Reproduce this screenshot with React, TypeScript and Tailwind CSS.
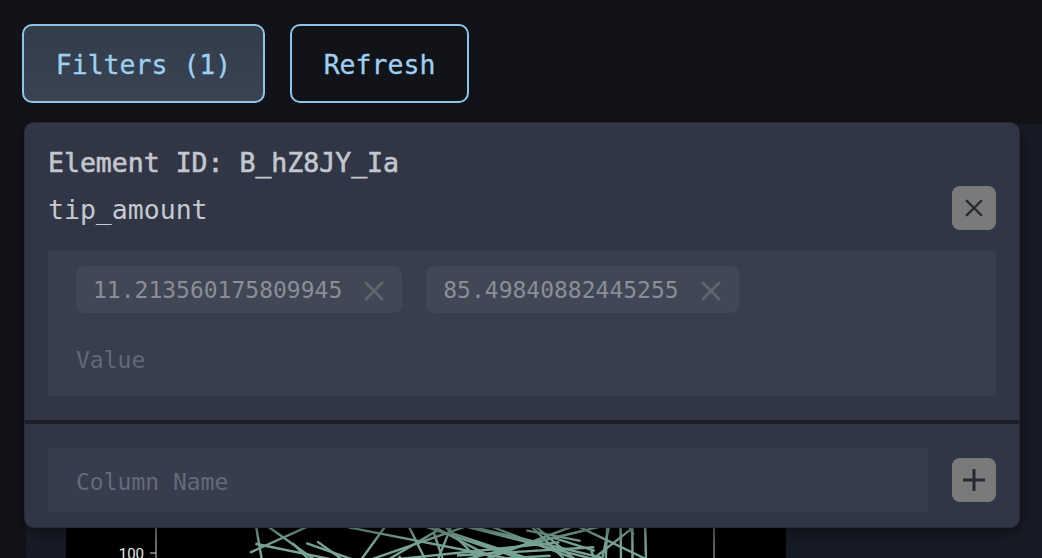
import React from "react";

// deterministic tangle of segments for the chart peeking out under the popover
function makeLines() {
  let seed = 11;
  const rnd = () => {
    seed = (seed * 16807) % 2147483647;
    return seed / 2147483647;
  };
  const out: { x1: number; y1: number; x2: number; y2: number }[] = [];
  for (let i = 0; i < 48; i++) {
    out.push({
      x1: 184 + rnd() * 400,
      y1: 10 + rnd() * 140,
      x2: 184 + rnd() * 400,
      y2: 10 + rnd() * 140,
    });
  }
  // the near-vertical strands on the right side
  out.push({ x1: 554, y1: 0, x2: 556, y2: 160 });
  out.push({ x1: 566, y1: 0, x2: 567, y2: 160 });
  out.push({ x1: 578, y1: 0, x2: 582, y2: 160 });
  out.push({ x1: 542, y1: 30, x2: 536, y2: 160 });
  return out;
}

const lines = makeLines();

function XIcon({ size, stroke, width }: { size: number; stroke: string; width: number }) {
  return (
    <svg width={size} height={size} viewBox="0 0 20 20" fill="none">
      <path d="M2 2L18 18M18 2L2 18" stroke={stroke} strokeWidth={width} strokeLinecap="round" />
    </svg>
  );
}

function PlusIcon() {
  return (
    <svg width="22" height="22" viewBox="0 0 22 22" fill="none">
      <path d="M11 1V21M1 11H21" stroke="#262a35" strokeWidth="3" strokeLinecap="round" />
    </svg>
  );
}

function Chip({ value }: { value: string }) {
  return (
    <div className="flex h-[47px] items-center gap-[22px] rounded-[8px] bg-[#414755] pl-[17px] pr-[18px] pt-[2px] text-[23px] text-[#8a8e98]">
      <span>{value}</span>
      <XIcon size={20} stroke="#60656f" width={2.8} />
    </div>
  );
}

export default function App() {
  return (
    <div
      className="relative h-[558px] w-full overflow-hidden bg-[#121219]"
      style={{ fontFamily: '"DejaVu Sans Mono", "Liberation Mono", monospace' }}
    >
      {/* Toolbar */}
      <div className="flex gap-[25px] pl-[22px] pt-[24px]">
        <button className="flex h-[79px] w-[243px] items-center justify-center rounded-[10px] border-2 border-[#8ec4ea] bg-gradient-to-b from-[#323c4b] to-[#3a4352] pt-[2px] text-[26.5px] text-[#9ed0f2] [-webkit-text-stroke:0.3px_#9ed0f2]">
          Filters (1)
        </button>
        <button className="flex h-[79px] w-[179px] items-center justify-center rounded-[10px] border-2 border-[#8ec4ea] bg-transparent pt-[2px] text-[26.5px] text-[#9ed0f2] [-webkit-text-stroke:0.3px_#9ed0f2]">
          Refresh
        </button>
      </div>

      {/* Content panel behind the popover */}
      <div className="ml-[26px] mt-[21px] h-[600px] bg-[#171b26] pl-[40px] pt-[356px]">
        <div className="relative h-[200px] w-[720px] bg-black">
          <svg width="720" height="200" className="absolute left-0 top-0">
            {lines.map((l, i) => (
              <line key={i} x1={l.x1} y1={l.y1} x2={l.x2} y2={l.y2} stroke="#78a396" strokeWidth="2.4" />
            ))}
            <line x1="90" y1="0" x2="90" y2="200" stroke="#d8d8d8" strokeWidth="1" />
            <line x1="84" y1="73" x2="90" y2="73" stroke="#d8d8d8" strokeWidth="1" />
            <line x1="648" y1="0" x2="648" y2="200" stroke="#9a9a9a" strokeWidth="1.2" />
            <text x="78" y="79" textAnchor="end" fontSize="15" fill="#e6e6e6" fontFamily="Roboto, sans-serif">
              100
            </text>
          </svg>
        </div>
      </div>

      {/* Filter popover */}
      <div className="absolute left-[24px] top-[122px] w-[996px] overflow-hidden rounded-[10px] border border-[#272c38] bg-[#303646] shadow-[0_4px_14px_rgba(0,0,0,0.45)]">
        <div className="px-[23px] pb-[24px] pt-[23px]">
          <div className="h-[32px] text-[26.5px] leading-[34px] text-[#c3c6cc] [-webkit-text-stroke:0.6px_#c3c6cc]">
            Element ID: B_hZ8JY_Ia
          </div>
          <div className="mt-[8px] flex h-[44px] items-center justify-between">
            <span className="pt-[4px] text-[26.5px] leading-[32px] text-[#c6c9ce]">tip_amount</span>
            <button className="flex h-[44px] w-[44px] items-center justify-center rounded-[8px] bg-[#7a7a7a]">
              <XIcon size={18} stroke="#262a35" width={2.6} />
            </button>
          </div>
          <div className="mt-[20px] flex h-[146px] flex-col rounded-[4px] bg-[#383e4e] pl-[28px] pt-[16px]">
            <div className="flex gap-[24px]">
              <Chip value="11.213560175809945" />
              <Chip value="85.49840882445255" />
            </div>
            <div className="mt-[32px] text-[23px] leading-[30px] text-[#636875]">Value</div>
          </div>
        </div>
        <div className="h-[4px] bg-[#1b1e27]" />
        <div className="flex items-center gap-[24px] px-[23px] pb-[15px] pt-[24px]">
          <div className="flex h-[64px] flex-1 items-center rounded-[4px] bg-[#373d4d] pl-[28px] pt-[4px] text-[23px] text-[#646a77]">
            Column Name
          </div>
          <button className="flex h-[44px] w-[44px] items-center justify-center rounded-[8px] bg-[#7a7a7a]">
            <PlusIcon />
          </button>
        </div>
      </div>
    </div>
  );
}
